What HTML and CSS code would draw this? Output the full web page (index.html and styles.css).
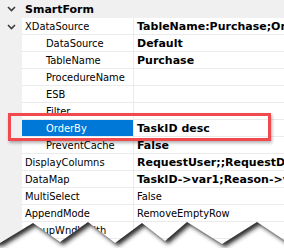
FILE: index.html
```html
<!DOCTYPE html>
<html>
<head>
	<title>Property Grid</title>
	<link rel="stylesheet" href="styles.css">
</head>
<body>

	<div class="grid">
		<div class="props">
			<div class="cat">
				<span class="gut"><svg class="chev" width="9" height="6" viewBox="0 0 9 6"><polyline points="1,1 4.5,4.5 8,1" /></svg></span>
				<span class="catname">SmartForm</span>
			</div>

			<div class="row">
				<span class="gut"><svg class="chev" width="9" height="6" viewBox="0 0 9 6"><polyline points="1,1 4.5,4.5 8,1" /></svg></span>
				<span class="name">XDataSource</span>
				<span class="val b">TableName:Purchase;OrderBy:TaskID desc</span>
			</div>
			<div class="row">
				<span class="gut"></span>
				<span class="name sub">DataSource</span>
				<span class="val b">Default</span>
			</div>
			<div class="row">
				<span class="gut"></span>
				<span class="name sub">TableName</span>
				<span class="val b">Purchase</span>
			</div>
			<div class="row">
				<span class="gut"></span>
				<span class="name sub">ProcedureName</span>
				<span class="val"></span>
			</div>
			<div class="row">
				<span class="gut"></span>
				<span class="name sub">ESB</span>
				<span class="val"></span>
			</div>
			<div class="row">
				<span class="gut"></span>
				<span class="name sub">Filter</span>
				<span class="val"></span>
			</div>
			<div class="row selected">
				<span class="gut"></span>
				<span class="name sub">OrderBy</span>
				<span class="val b">TaskID desc</span>
			</div>
			<div class="row">
				<span class="gut"></span>
				<span class="name sub">PreventCache</span>
				<span class="val b">False</span>
			</div>
			<div class="row">
				<span class="gut"></span>
				<span class="name">DisplayColumns</span>
				<span class="val b">RequestUser;;RequestDate;;Reason</span>
			</div>
			<div class="row">
				<span class="gut"></span>
				<span class="name">DataMap</span>
				<span class="val b">TaskID-&gt;var1;Reason-&gt;var2</span>
			</div>
			<div class="row">
				<span class="gut"></span>
				<span class="name">MultiSelect</span>
				<span class="val">False</span>
			</div>
			<div class="row">
				<span class="gut"></span>
				<span class="name">AppendMode</span>
				<span class="val">RemoveEmptyRow</span>
			</div>
			<div class="row">
				<span class="gut"></span>
				<span class="name">GroupWndWidth</span>
				<span class="val"></span>
			</div>
			<div class="row">
				<span class="gut"></span>
				<span class="name">Height</span>
				<span class="val"></span>
			</div>
		</div>

		<div class="vscroll">
			<div class="sbtn"><span class="arrow"></span></div>
			<div class="thumb"></div>
			<div class="track"></div>
		</div>

		<!-- highlight marker -->
		<div class="mark"></div>

		<!-- torn paper edge -->
		<svg class="tear" width="284" height="30" viewBox="0 0 284 30">
			<defs>
				<filter id="blur" x="-10%" y="-50%" width="120%" height="200%">
					<feGaussianBlur stdDeviation="2" />
				</filter>
				<clipPath id="below">
					<polygon points="0,25 33,5 60,24 88,4 115,25 142,5 165,23 187,4 222,26 257,4 284,22 284,30 0,30" />
				</clipPath>
			</defs>
			<polygon points="0,25 33,5 60,24 88,4 115,25 142,5 165,23 187,4 222,26 257,4 284,22 284,30 0,30" fill="#fff" />
			<g clip-path="url(#below)">
				<polygon points="-10,-20 -10,28 3,28 36,8 63,27 91,7 118,28 145,8 168,26 190,7 225,29 260,7 287,25 300,25 300,-20" fill="#2a2a2a" filter="url(#blur)" />
			</g>
		</svg>
	</div>

</body>
</html>
```

FILE: styles.css
```css
*{
	margin: 0;
	padding: 0;
	box-sizing: border-box;
}
body{
	background: #fff;
}
.grid{
	position: relative;
	width: 284px;
	height: 248px;
	display: flex;
	overflow: hidden;
	font-family: "DejaVu Sans Condensed", "DejaVu Sans", sans-serif;
	font-size: 11px;
	color: #000;
	background: #f0f0f0;
}
.props{
	flex: 1;
	background: #f0f0f0;
}
.gut{
	width: 22px;
	flex: none;
	display: flex;
	align-items: center;
	justify-content: center;
	background: #f0f0f0;
}
.chev polyline{
	fill: none;
	stroke: #3c3c3c;
	stroke-width: 1.6;
}
.cat{
	display: flex;
	height: 18px;
	align-items: center;
	background: #f0f0f0;
}
.catname{
	padding-left: 3px;
	font-family: "DejaVu Sans", sans-serif;
	font-weight: bold;
}
.row{
	display: flex;
	height: 17px;
}
.name, .val{
	display: flex;
	align-items: center;
	background: #fff;
	border-bottom: 1px solid #ebebeb;
	white-space: nowrap;
	overflow: hidden;
}
.name{
	width: 112px;
	padding-left: 3px;
	border-right: 1px solid #ebebeb;
}
.name.sub{
	padding-left: 24px;
}
.val{
	flex: 1;
	padding-left: 3px;
}
.b{
	font-family: "DejaVu Sans", sans-serif;
	font-weight: bold;
}
.selected .name{
	background: #0078d7;
	color: #fff;
}
.vscroll{
	width: 18px;
	display: flex;
	flex-direction: column;
	background: #fff;
}
.sbtn{
	height: 17px;
	display: flex;
	align-items: center;
	justify-content: center;
	background: #f0f0f0;
	border: 1px solid #fff;
	border-right-color: #a0a0a0;
	border-bottom-color: #a0a0a0;
}
.arrow{
	width: 0;
	height: 0;
	border-left: 4px solid transparent;
	border-right: 4px solid transparent;
	border-bottom: 4px solid #000;
}
.thumb{
	height: 116px;
	background: #f0f0f0;
	border: 1px solid #e3e3e3;
	border-right-color: #a0a0a0;
	border-bottom-color: #a0a0a0;
}
.track{
	flex: 1;
	background: repeating-conic-gradient(#fff 0 25%, #e2e2e2 0 50%) 0 0 / 2px 2px;
}
.mark{
	position: absolute;
	left: 8px;
	top: 113px;
	width: 263px;
	height: 28px;
	border: 3px solid #f04a4f;
	box-shadow: 1px 2px 3px rgba(0, 0, 0, 0.3);
}
.tear{
	position: absolute;
	left: 0;
	bottom: 0;
}
```
